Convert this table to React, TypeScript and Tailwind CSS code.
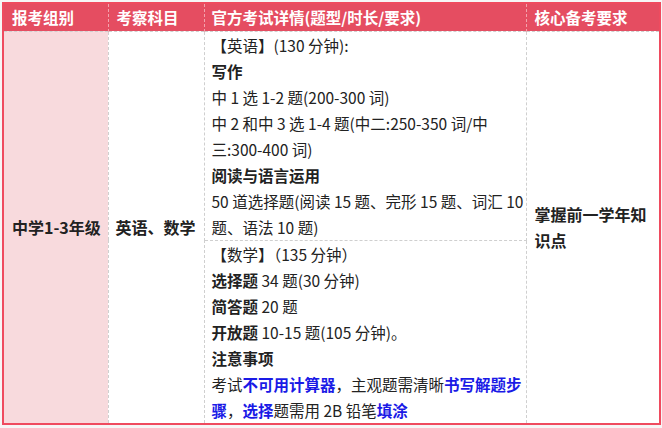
import type { ReactNode } from "react";

const B = ({ children }: { children: ReactNode }) => (
  <span className="font-bold">{children}</span>
);

const Blue = ({ children }: { children: ReactNode }) => (
  <span className="font-bold text-[#1a1ae6]">{children}</span>
);

const Line = ({ children }: { children: ReactNode }) => (
  <div className="whitespace-nowrap">{children}</div>
);

export default function App() {
  return (
    <div className="min-h-screen bg-[#f6f6f6] pt-[2px] pl-[2px] font-['Noto_Sans_CJK_SC','Noto_Sans',sans-serif] text-[15.5px] leading-[26px] text-[#222]">
      <table className="w-[657px] table-fixed border-collapse border-2 border-solid border-[#ef4b5f] bg-white">
        <colgroup>
          <col className="w-[105px]" />
          <col className="w-[96px]" />
          <col className="w-[322px]" />
          <col className="w-[134px]" />
        </colgroup>
        <thead>
          <tr className="h-[28px] bg-[#e54d61] text-left text-[15.5px] text-white">
            <th className="border-r border-dashed border-r-[#f3a3ad] px-[8px] py-0 font-bold">报考组别</th>
            <th className="border-r border-dashed border-r-[#f3a3ad] px-[8px] py-0 font-bold">考察科目</th>
            <th className="border-r border-dashed border-r-[#f3a3ad] px-[7px] py-0 font-bold">官方考试详情(题型/时长/要求)</th>
            <th className="px-[8px] py-0 font-bold">核心备考要求</th>
          </tr>
        </thead>
        <tbody>
          <tr className="h-[208px]">
            <td rowSpan={2} className="border border-dashed border-[#cfcfcf] bg-[#f8dadd] px-[8px] align-middle text-[16px] font-bold whitespace-nowrap">
              中学1-3年级
            </td>
            <td rowSpan={2} className="border border-dashed border-[#cfcfcf] px-[7px] align-middle text-[16px] font-bold whitespace-nowrap">
              英语、数学
            </td>
            <td className="border border-dashed border-[#cfcfcf] px-[7px] py-0 align-top">
              <Line>【英语】(130 分钟):</Line>
              <Line><B>写作</B></Line>
              <Line>中 1 选 1-2 题(200-300 词)</Line>
              <Line>中 2 和中 3 选 1-4 题(中二:250-350 词/中</Line>
              <Line>三:300-400 词)</Line>
              <Line><B>阅读与语言运用</B></Line>
              <Line>50 道选择题(阅读 15 题、完形 15 题、词汇 10</Line>
              <Line>题、语法 10 题)</Line>
            </td>
            <td rowSpan={2} className="border border-dashed border-[#cfcfcf] px-[8px] align-middle text-[16px] font-bold">
              <Line>掌握前一学年知</Line>
              <Line>识点</Line>
            </td>
          </tr>
          <tr className="h-[180px]">
            <td className="border border-dashed border-[#cfcfcf] px-[7px] py-0 align-top">
              <Line>【数学】（135 分钟）</Line>
              <Line><B>选择题</B> 34 题(30 分钟)</Line>
              <Line><B>简答题</B> 20 题</Line>
              <Line><B>开放题</B> 10-15 题(105 分钟)。</Line>
              <Line><B>注意事项</B></Line>
              <Line>
                考试<Blue>不可用计算器</Blue>，主观题需清晰<Blue>书写解题步</Blue>
              </Line>
              <Line>
                <Blue>骤</Blue>，<Blue>选择</Blue>题需用 2B 铅笔<Blue>填涂</Blue>
              </Line>
            </td>
          </tr>
        </tbody>
      </table>
    </div>
  );
}
